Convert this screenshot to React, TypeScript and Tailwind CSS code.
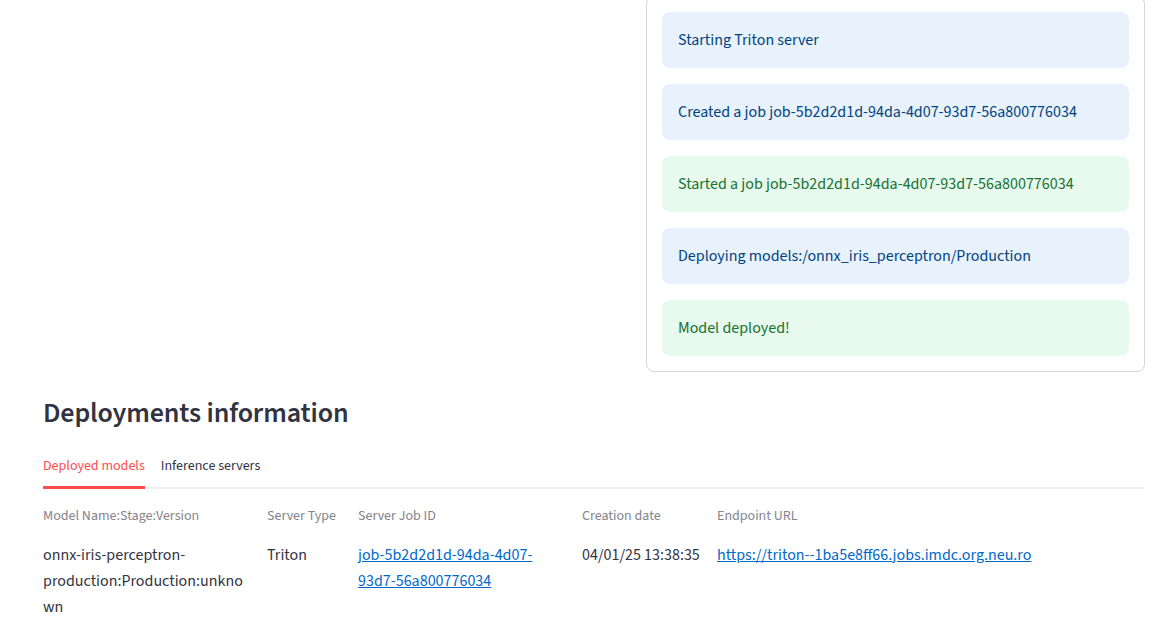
import React from 'react';

const messages = [
  { text: 'Starting Triton server', kind: 'info' },
  { text: 'Created a job job-5b2d2d1d-94da-4d07-93d7-56a800776034', kind: 'info' },
  { text: 'Started a job job-5b2d2d1d-94da-4d07-93d7-56a800776034', kind: 'success' },
  { text: 'Deploying models:/onnx_iris_perceptron/Production', kind: 'info' },
  { text: 'Model deployed!', kind: 'success' },
];

const headers = ['Model Name:Stage:Version', 'Server Type', 'Server Job ID', 'Creation date', 'Endpoint URL'];

export default function App() {
  return (
    <div className="min-h-screen bg-white font-['Source_Sans_3','Lato',sans-serif] text-[#31333f] pl-[43px] pr-[19px] overflow-hidden">
      {/* Status log */}
      <div className="grid grid-cols-[1fr_499px] gap-4 -mt-[4px]">
        <div />
        <div className="border border-[#d6d6d9] rounded-lg p-[15px] flex flex-col gap-4">
          {messages.map((m, i) => (
            <div
              key={i}
              className={`rounded-lg px-4 py-4 text-base leading-6 ${
                m.kind === 'info' ? 'bg-[#e8f2fc] text-[#004280]' : 'bg-[#e8f9ee] text-[#177233]'
              }`}
            >
              {m.text}
            </div>
          ))}
        </div>
      </div>

      {/* Deployments */}
      <h3 className="mt-[25px] text-[28px] leading-[1.2] font-semibold tracking-[-0.005em] text-[#31333f]">
        Deployments information
      </h3>

      <div className="mt-[15px] flex gap-4 items-start shadow-[inset_0_-2px_0_#f0f2f6] text-sm">
        <div className="h-[43px] flex items-center border-b-[3px] border-[#ff4b4b] text-[#ff4b4b]">Deployed models</div>
        <div className="h-[40px] flex items-center text-[#31333f]">Inference servers</div>
      </div>

      <div className="mt-[17px] grid grid-cols-[224px_91px_224px_135px_1fr]">
        {headers.map(h => (
          <div key={h} className="text-sm leading-[21px] text-[#83848c]">{h}</div>
        ))}
        <div className="mt-[15px] text-base leading-[26px]">
          <span className="block">onnx-iris-perceptron-</span>
          <span className="block">production:Production:unkno</span>
          <span className="block">wn</span>
        </div>
        <div className="mt-[15px] text-base leading-[26px]">Triton</div>
        <div className="mt-[15px] text-base leading-[26px]">
          <a href="#" className="text-[#0068c9] underline">
            <span className="block">job-5b2d2d1d-94da-4d07-</span>
            <span className="block">93d7-56a800776034</span>
          </a>
        </div>
        <div className="mt-[15px] text-base leading-[26px]">04/01/25 13:38:35</div>
        <div className="mt-[15px] text-base leading-[26px]">
          <a href="#" className="text-[#0068c9] underline">https://triton--1ba5e8ff66.jobs.imdc.org.neu.ro</a>
        </div>
      </div>
    </div>
  );
}
